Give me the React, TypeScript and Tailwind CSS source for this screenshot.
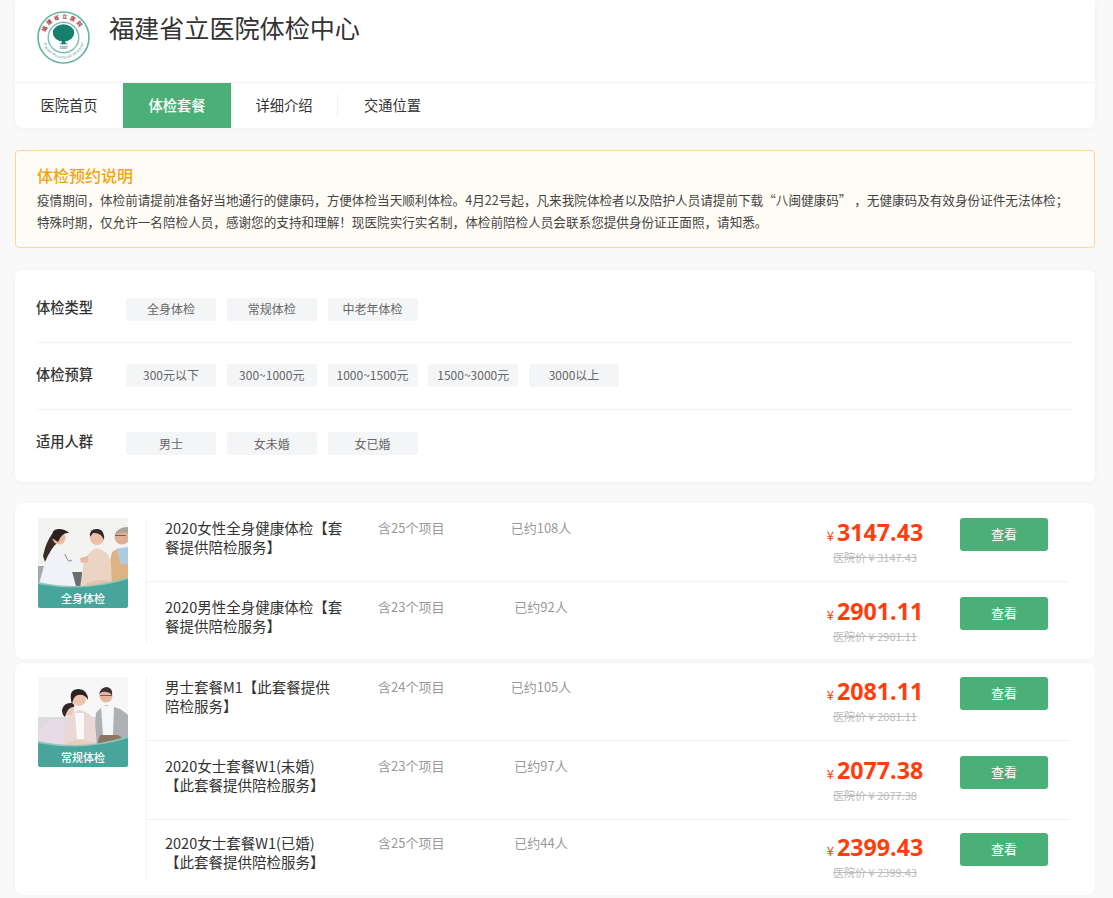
import type { ReactNode } from 'react';

const filters = [
  { label: '体检类型', labelClass: '-mt-[5px]', chipClass: '', items: ['全身体检', '常规体检', '中老年体检'] },
  { label: '体检预算', labelClass: '-mt-[5px]', chipClass: '-mt-[2px]', items: ['300元以下', '300~1000元', '1000~1500元', '1500~3000元', '3000以上'] },
  { label: '适用人群', labelClass: '-mt-[5px]', chipClass: '', items: ['男士', '女未婚', '女已婚'] },
];

const Logo = () => (
  <svg viewBox="0 0 52 52" className="w-[53px] h-[53px]">
    <circle cx="26" cy="26" r="25" fill="#fff" stroke="#63b3a3" strokeWidth="1.6" />
    <circle cx="26" cy="26" r="15" fill="#fff" stroke="#7cc0b2" strokeWidth="1.4" />
    <defs>
      <path id="logoTop" d="M7.5 26 A18.5 18.5 0 0 1 44.5 26" />
      <path id="logoBottom" d="M5.5 26 A20.5 20.5 0 0 0 46.5 26" />
    </defs>
    <text fontSize="5.4" fontWeight="700" letterSpacing="2" fill="#a5383c" fontFamily="Noto Sans CJK SC">
      <textPath href="#logoTop" startOffset="5">福建省立医院</textPath>
    </text>
    <text fontSize="3.9" letterSpacing="0.35" fill="#4f9486" fontFamily="Liberation Sans">
      <textPath href="#logoBottom" startOffset="6">Fujian Provincial Hospital</textPath>
    </text>
    <ellipse cx="26" cy="21.5" rx="10.5" ry="8.5" fill="#16806d" />
    <path d="M24.6 26h2.8l.6 5.5 2.6 1.2h-9l2.6-1.2z" fill="#16806d" />
    <text x="26" y="37.5" textAnchor="middle" fontSize="3.6" fontWeight="700" fill="#3d7d70" fontFamily="Liberation Sans">1937</text>
  </svg>
);

const Band = ({ label, children }: { label: string; children: ReactNode }) => (
  <div className="relative w-[90px] h-[90px] rounded-[2px] overflow-hidden bg-[#f5f5f5] shrink-0">
    <svg viewBox="0 0 90 90" className="w-full h-full">
      <g className="blur-[0.4px]">{children}</g>
      <path d="M0 64 Q45 74 90 59 V62 Q45 77 0 66z" fill="#8fc7bd" />
      <path d="M0 66 Q45 75 90 61 V90 H0z" fill="#48a59c" />
    </svg>
    <span className="absolute left-0 right-0 bottom-0 text-center text-[11px] leading-[20px] font-medium text-white">{label}</span>
  </div>
);

const DoctorPicture = () => (
  <Band label="全身体检">
    <rect width="90" height="70" fill="#f3f3f2" />
    <rect x="0" y="48" width="6" height="20" fill="#a4a7ab" />
    <rect x="32" y="54" width="12" height="14" fill="#6a6d71" />
    {/* elder man */}
    <path d="M66 72 L74 34 Q82 29 90 30 V68z" fill="#dcb483" />
    <path d="M78 31 L90 29 V46 L83 46z" fill="#aecbdf" />
    <circle cx="84" cy="19" r="7.5" fill="#dfae93" />
    <path d="M77 17 Q79 9 90 9 V15 Q82 13 77 17z" fill="#a9a49b" />
    <rect x="77" y="17" width="11" height="0.9" fill="#6b5a50" />
    {/* woman */}
    <path d="M42 70 L46 42 Q52 33 58 30 Q70 32 73 44 L74 70z" fill="#ecd4c4" />
    <circle cx="59" cy="20" r="7" fill="#ecbfa6" />
    <path d="M52 19 Q51 10 60 11 Q67 12 66 22 Q63 14 55 15z" fill="#33272a" />
    <path d="M48 66 Q58 60 72 63 L70 70 H48z" fill="#e5c2ad" />
    {/* doctor */}
    <path d="M1 66 L7 44 Q11 33 20 31 Q27 32 30 40 L44 40 L45 45 L33 50 L38 68 H1z" fill="#f0f2f7" />
    <path d="M5 38 Q8 24 14 16 L20 24 Q13 30 7 44z" fill="#3a2a28" />
    <circle cx="21" cy="20" r="6.5" fill="#eab9a0" />
    <path d="M14 20 Q13 11 21 11 Q27 11 31 15 Q24 14 20 24z" fill="#2b1f1f" />
    <path d="M27 36 Q30 46 34 42" fill="none" stroke="#6f7378" strokeWidth="0.8" />
    <path d="M42 40 L50 38 L50 44 L43 45z" fill="#eab9a0" />
  </Band>
);

const FamilyPicture = () => (
  <Band label="常规体检">
    <rect width="90" height="70" fill="#f7f7f8" />
    <rect x="0" y="40" width="90" height="30" fill="#dcdcde" />
    {/* father */}
    <path d="M55 70 L58 36 Q64 29 68 28 Q82 30 90 38 V60 L64 70z" fill="#aeb0b4" />
    <path d="M63 29 H76 L75 58 H65z" fill="#f5f6f7" />
    <path d="M58 70 L62 58 H80 L86 62 L72 68z" fill="#8d7763" />
    <circle cx="68" cy="19" r="6.5" fill="#e5b79f" />
    <path d="M61 17 Q63 10 69 10 Q75 11 74 18 Q70 14 64 15z" fill="#3a3234" />
    <rect x="62" y="18" width="12" height="0.9" fill="#6b5a50" />
    {/* daughter */}
    <path d="M0 62 Q5 44 18 42 Q26 42 27 50 L27 70 H0z" fill="#e9dbe6" />
    <circle cx="30" cy="33" r="6" fill="#eec8b4" />
    <path d="M24 33 Q26 25 34 26 Q37 28 36 30 Q30 29 27 40 Q24 38 24 33z" fill="#33262a" />
    {/* mother */}
    <path d="M25 70 L29 42 Q35 34 42 33 Q52 35 57 44 L59 70z" fill="#ead8d6" />
    <path d="M37 36 H46 L46 62 H39z" fill="#fbf9f7" />
    <circle cx="41" cy="22" r="7" fill="#eec3ad" />
    <path d="M33 23 Q31 12 41 12 Q50 13 50 23 Q47 17 40 18 Q35 19 34 28z" fill="#2c2224" />
    <path d="M28 66 Q42 60 56 66 L54 72 H30z" fill="#ecccb9" />
  </Band>
);

type Pack = { title: ReactNode; count: number; booked: number; price: string; height: string };

const Rows = ({ rows }: { rows: Pack[] }) => (
  <div className="flex-1 self-start border-l border-[#f2f2f2] ml-[18px]">
    {rows.map((p, i) => (
      <div key={p.price} className={p.height}>
        <div className={`flex h-[63px] mr-[26px] ${i === rows.length - 1 ? '' : 'border-b border-[#f2f2f2]'} box-content`}>
          <div className="w-[231px] pl-[18px] text-[14.5px] leading-[19px] text-[#333]">{p.title}</div>
          <div className="w-[128px] text-[13px] leading-[19px] text-[#999]">含{p.count}个项目</div>
          <div className="w-[70px] text-center text-[13px] leading-[19px] text-[#999] whitespace-nowrap">已约{p.booked}人</div>
          <div className="flex-1 flex flex-col items-end -mt-[2px]">
            <div className="w-[130px] flex flex-col items-center">
              <div className="flex items-baseline text-[#ff3d0d]">
                <span className="text-[13px] mr-[3px]">¥</span>
                <span className="text-[23.25px] leading-[33px] font-bold font-['Open_Sans','Noto_Sans_CJK_SC',sans-serif]">{p.price}</span>
              </div>
              <span className="text-[11px] leading-[16px] text-[#bbb] line-through whitespace-nowrap">医院价 ¥ {p.price}</span>
            </div>
          </div>
          <div className="w-[88px] ml-[20px] mr-[21px] h-[33px] pb-[2px] shrink-0 rounded-[3px] bg-[#4bb078] text-white text-[13px] flex items-center justify-center">查看</div>
        </div>
      </div>
    ))}
  </div>
);

const card1: Pack[] = [
  { title: <>2020女性全身健康体检【套<br />餐提供陪检服务】</>, count: 25, booked: 108, price: '3147.43', height: 'h-[79px]' },
  { title: <>2020男性全身健康体检【套<br />餐提供陪检服务】</>, count: 23, booked: 92, price: '2901.11', height: 'h-[46px]' },
];

const card2: Pack[] = [
  { title: <>男士套餐M1【此套餐提供<br />陪检服务】</>, count: 24, booked: 105, price: '2081.11', height: 'h-[79px]' },
  { title: <>2020女士套餐W1(未婚)<br />【此套餐提供陪检服务】</>, count: 23, booked: 97, price: '2077.38', height: 'h-[77px]' },
  { title: <>2020女士套餐W1(已婚)<br />【此套餐提供陪检服务】</>, count: 25, booked: 44, price: '2399.43', height: 'h-[47px]' },
];

export default function App() {
  return (
    <div className="h-[898px] overflow-hidden bg-[#f9f9f9] pl-[15px] font-['Noto_Sans_CJK_SC','Noto_Sans',sans-serif] text-[#333]">
      <div className="w-[1080px]">
        {/* Header */}
        <div className="bg-white rounded-b-lg shadow-[0_1px_6px_rgba(0,0,0,0.04)]">
          <div className="h-[83px] flex items-start pl-[22px] pt-[11px] border-b border-[#f3f3f3]">
            <Logo />
            <h1 className="ml-[19px] text-[25.1px] leading-[32px] font-normal text-[#333]">福建省立医院体检中心</h1>
          </div>
          <div className="flex h-[45px] pb-[2px] text-[14.25px]">
            <div className="w-[108px] flex items-center justify-center">医院首页</div>
            <div className="w-[108px] -mb-[2px] pb-[2px] flex items-center justify-center bg-[#4bb078] text-white font-medium">体检套餐</div>
            <div className="w-[106px] flex items-center justify-center">详细介绍</div>
            <div className="w-[111px] flex items-center justify-center relative">
              <span className="absolute left-0 top-[11px] h-[23px] w-px bg-[#f0f0f0]" />
              交通位置
            </div>
          </div>
        </div>

        {/* Notice */}
        <div className="mt-[22px] h-[98px] rounded-[4px] border border-[#f9d79f] bg-[#fffcf6] px-[21px] pt-[12px]">
          <div className="text-[16px] leading-[24px] font-medium text-[#f0a50f]">体检预约说明</div>
          <p className="text-[12.6px] leading-[22px] text-[#444] mt-[2px] whitespace-nowrap">
            疫情期间，体检前请提前准备好当地通行的健康码，方便体检当天顺利体检。4月22号起，凡来我院体检者以及陪护人员请提前下载“八闽健康码” ，无健康码及有效身份证件无法体检；
            <br />
            特殊时期，仅允许一名陪检人员，感谢您的支持和理解！现医院实行实名制，体检前陪检人员会联系您提供身份证正面照，请知悉。
          </p>
        </div>

        {/* Filters */}
        <div className="mt-[22px] h-[212px] bg-white rounded-lg shadow-[0_1px_6px_rgba(0,0,0,0.04)] pl-[21px] pr-[23px] pt-[6px]">
          {filters.map((f, i) => (
            <div key={f.label} className={`flex items-center h-[67px] ${i < 2 ? 'border-b border-[#f2f2f2]' : ''}`}>
              <div className={`w-[90px] text-[14.25px] font-medium text-[#333] ${f.labelClass}`}>{f.label}</div>
              <div className={`flex gap-[10.75px] ${f.chipClass}`}>
                {f.items.map((t) => (
                  <span key={t} className="w-[90px] h-[23px] rounded-[3px] bg-[#f4f5f7] text-[12px] text-[#666] flex items-center justify-center whitespace-nowrap">{t}</span>
                ))}
              </div>
            </div>
          ))}
        </div>

        {/* Packages */}
        <div className="mt-[21px] h-[156px] bg-white rounded-lg shadow-[0_1px_4px_rgba(0,0,0,0.03)] pl-[23px] pt-[15px] flex">
          <DoctorPicture />
          <Rows rows={card1} />
        </div>
        <div className="mt-[4px] h-[232px] bg-white rounded-lg shadow-[0_1px_4px_rgba(0,0,0,0.03)] pl-[23px] pt-[14px] flex">
          <FamilyPicture />
          <Rows rows={card2} />
        </div>
      </div>
    </div>
  );
}
